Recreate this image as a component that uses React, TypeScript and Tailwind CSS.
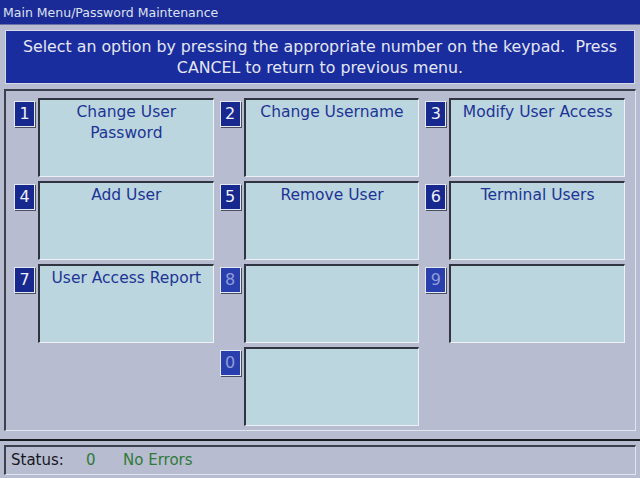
const options: { n: string; label: string; enabled: boolean }[] = [
  { n: '1', label: 'Change User Password', enabled: true },
  { n: '2', label: 'Change Username', enabled: true },
  { n: '3', label: 'Modify User Access', enabled: true },
  { n: '4', label: 'Add User', enabled: true },
  { n: '5', label: 'Remove User', enabled: true },
  { n: '6', label: 'Terminal Users', enabled: true },
  { n: '7', label: 'User Access Report', enabled: true },
  { n: '8', label: '', enabled: false },
  { n: '9', label: '', enabled: false },
  { n: '', label: '', enabled: false },
  { n: '0', label: '', enabled: false },
  { n: '', label: '', enabled: false },
]

function OptionCell({ n, label, enabled }: { n: string; label: string; enabled: boolean }) {
  if (!n) return <div />
  return (
    <div className="flex items-start gap-[3px]">
      <div
        className={`mt-[3px] w-[21px] h-[26px] flex items-center justify-center border border-[#e4e8f0] shadow-[1px_1px_0_#4a4f60] text-[16px] ${
          enabled ? 'bg-[#17288e] text-[#eef0fa]' : 'bg-[#2a3fae] text-[#8f9ed8]'
        }`}
      >
        {n}
      </div>
      <div className="flex-1 h-[79px] bg-[#bcd6e0] border-t-2 border-l-2 border-t-[#2f3440] border-l-[#2f3440] border-r border-b border-r-[#eef2f6] border-b-[#eef2f6] px-1 pt-[2px] text-center text-[15.5px] leading-[21px] text-[#1c3494]">
        {label === 'Change User Password' ? (
          <>
            Change User
            <br />
            Password
          </>
        ) : (
          label
        )}
      </div>
    </div>
  )
}

export default function App() {
  return (
    <div className="w-[640px] h-[478px] bg-[#b8bcd0] flex flex-col overflow-hidden font-['DejaVu_Sans',sans-serif]">
      {/* Title bar */}
      <div className="h-[25px] bg-[#1a2b98] text-[#dde1ef] text-[12.5px] leading-[25px] pl-[3px] border-b border-[#6b72a8]">
        Main Menu/Password Maintenance
      </div>

      {/* Instructions */}
      <div className="mx-[5px] mt-[5px] h-[54px] bg-[#1a2d9e] border border-[#d6dae8] flex flex-col items-center justify-center text-[#e4e7f3] text-[15.8px] leading-[21px]">
        <div>Select an option by pressing the appropriate number on the keypad.&nbsp; Press</div>
        <div>CANCEL to return to previous menu.</div>
      </div>

      {/* Options panel */}
      <div className="mx-[4px] mt-[5px] h-[342px] border-t-2 border-l-2 border-[#3b404c] border-r border-b border-r-[#e2e6ee] border-b-[#e2e6ee] pl-[8px] pr-[10px] pt-[7px]">
        <div className="grid grid-cols-3 gap-x-[6px] gap-y-[4px]">
          {options.map((o, i) => (
            <OptionCell key={i} {...o} />
          ))}
        </div>
      </div>

      {/* Status bar */}
      <div className="mt-[8px] h-[2px] bg-[#1a1c22]" />
      <div className="mx-[4px] mt-[4px] h-[30px] border-t-2 border-l-2 border-[#3b404c] border-r border-b border-r-[#e2e6ee] border-b-[#e2e6ee] flex items-center text-[15px] pl-[5px]">
        <span className="text-[#15171c] w-[75px]">Status:</span>
        <span className="text-[#2f7a3a] w-[37px]">0</span>
        <span className="text-[#2f7a3a]">No Errors</span>
      </div>
    </div>
  )
}
